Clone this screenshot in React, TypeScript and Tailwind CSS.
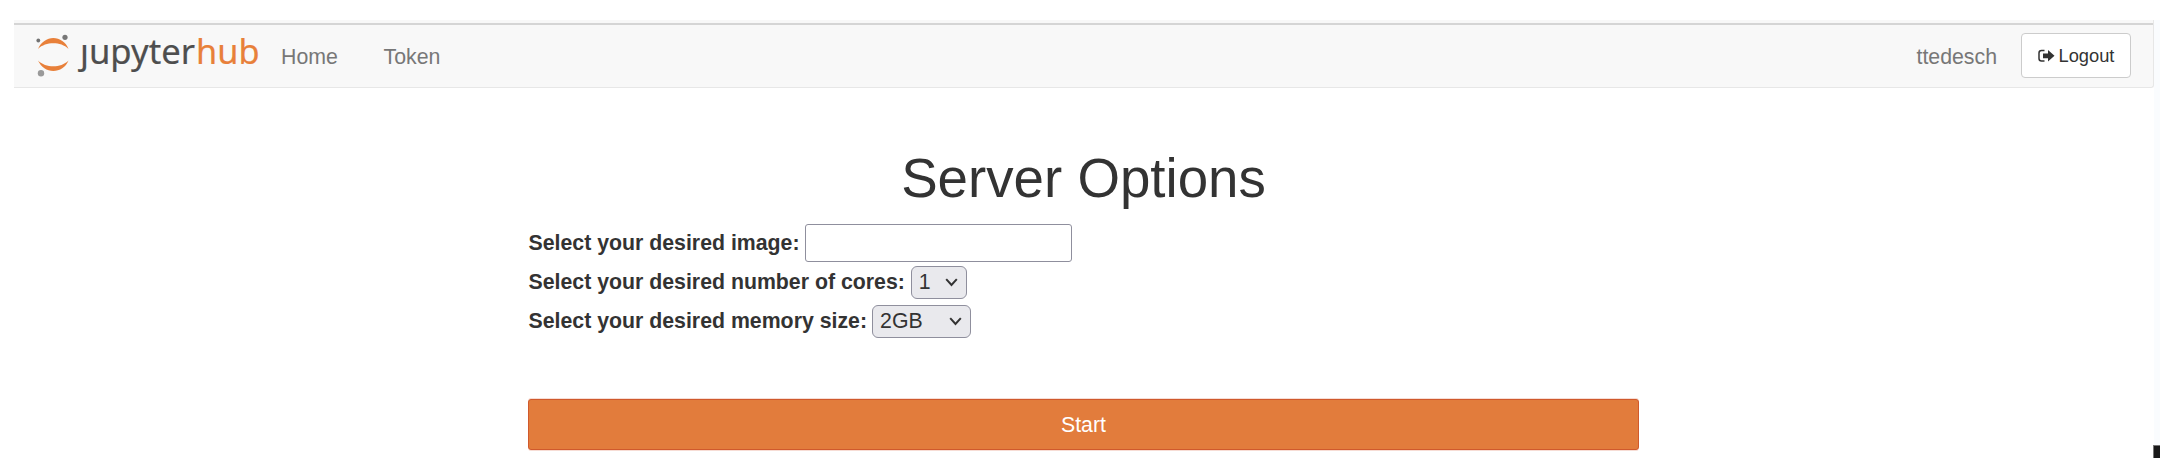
import React from "react";

function Logo() {
  return (
    <svg width="230" height="56" viewBox="34 30 230 56" className="block shrink-0 overflow-visible" role="img" aria-label="jupyterhub">
      <defs>
        <clipPath id="stem">
          <path d="M70 44.500H89V20H210V95H70Z" />
        </clipPath>
      </defs>
      <path d="M38 49C41 42 47 38 53.300 38S66 42 68.500 49C64.500 45 59 43.300 53.300 43.300S42 45 38 49Z" fill="#e8803a" />
      <path d="M38 60.500C41 67 47 71 53.300 71S66 67 68.500 60.500C64.500 64.500 59 66.300 53.300 66.300S42 64.500 38 60.500Z" fill="#e8803a" />
      <circle cx="38.300" cy="40.500" r="1.900" fill="#737373" />
      <circle cx="65" cy="37.300" r="2.600" fill="#777777" />
      <circle cx="41" cy="73.200" r="3.200" fill="#9a9a9a" />
      <g fontFamily='"Noto Sans", sans-serif' fontSize="34" strokeWidth="0.200">
        <text x="80" y="63.500" textLength="115" lengthAdjust="spacingAndGlyphs" fill="#4e4e4e" stroke="#4e4e4e" clipPath="url(#stem)">jupyter</text>
        <text x="196" y="63.500" textLength="63.500" lengthAdjust="spacingAndGlyphs" fill="#e8803a" stroke="#e8803a">hub</text>
      </g>
    </svg>
  );
}

function LogoutIcon() {
  return (
    <svg width="17" height="14" viewBox="0 0 17 14" className="block">
      <path d="M6.500 1.500H3.500Q1 1.500 1 4V9.500Q1 12 3.500 12H6.500" fill="none" stroke="#333333" strokeWidth="1.500" />
      <path d="M5 4.500H10V1L16.500 6.800L10 12.600V9.200H5Z" fill="#333333" />
    </svg>
  );
}

function Select({ value, className }: { value: string; className: string }) {
  return (
    <button className={"flex h-[33px] items-center justify-between rounded-[6px] border border-[#8f8f9d] bg-[#e9e9ed] pr-[8px] pl-[7px] text-[21.3px] leading-none " + className}>
      <span>{value}</span>
      <svg width="13" height="9" viewBox="0 0 13 9">
        <path d="M1.200 1.200L6.500 7L11.800 1.200" fill="none" stroke="#333333" strokeWidth="2" />
      </svg>
    </button>
  );
}

export default function App() {
  return (
    <div className="flex h-[458px] w-[2160px] overflow-hidden bg-white font-['Liberation_Sans',Arial,sans-serif] text-[21.3px] text-[#333333]">
      <div className="flex w-[2154px] shrink-0 flex-col pt-5 pl-[14px]">
        <nav className="flex h-[68px] items-center rounded-br-[3px] border-r border-b border-[#e7e7e7] bg-[#f8f8f8] pt-[4px] pr-[22px] shadow-[inset_0_3px_0_#f8f8f8,inset_0_5px_0_#d5d5d5]">
          <div className="-mt-[4px] flex h-[67px] w-[267px] items-start pt-[10px] pl-5">
            <Logo />
          </div>
          <a className="w-[102.500px] pt-[2px] leading-[30px] text-[#777777]">Home</a>
          <a className="pt-[2px] leading-[30px] text-[#777777]">Token</a>
          <a className="mr-[24px] ml-auto pt-[2px] leading-[30px] text-[#777777]">ttedesch</a>
          <button className="flex h-[45px] w-[110px] items-center justify-center gap-[4px] rounded-[4px] border border-[#cccccc] bg-white pt-px text-[18.300px]">
            <LogoutIcon />
            Logout
          </button>
        </nav>
        <main className="ml-[514px] flex w-[1111px] flex-col pt-[60px]">
          <h1 className="text-center text-[54.700px] leading-[60px]">Server Options</h1>
          <form className="flex flex-col pt-[16px]" onSubmit={(e) => e.preventDefault()}>
            <div className="flex h-[38px] items-center gap-[5px]">
              <label className="pt-[2px] pl-[0.500px] font-bold">Select your desired image:</label>
              <input className="h-[38px] w-[267px] rounded-[3px] border border-[#8f8f9d] bg-white" />
            </div>
            <div className="mt-[4px] flex h-[33px] items-center gap-[6px]">
              <label className="pl-[0.500px] font-bold">Select your desired number of cores:</label>
              <Select value="1" className="w-[56px]" />
            </div>
            <div className="mt-[6px] flex h-[33px] items-center gap-[5px]">
              <label className="pl-[0.500px] font-bold">Select your desired memory size:</label>
              <Select value="2GB" className="w-[99px]" />
            </div>
            <button className="mt-[61px] h-[51px] w-full rounded-[3px] border border-[#d0592c] bg-[#e27c3c] pt-[3px] text-white shadow-[0_1px_0_#f7ddd5,0_-1px_0_#f7ddd5]">Start</button>
          </form>
        </main>
      </div>
      <aside className="mt-5 flex flex-1 flex-col justify-end bg-[#fafcfe]">
        <div className="-ml-px h-[13px] border-t border-l border-[#777777] bg-[#191919]" />
      </aside>
    </div>
  );
}
